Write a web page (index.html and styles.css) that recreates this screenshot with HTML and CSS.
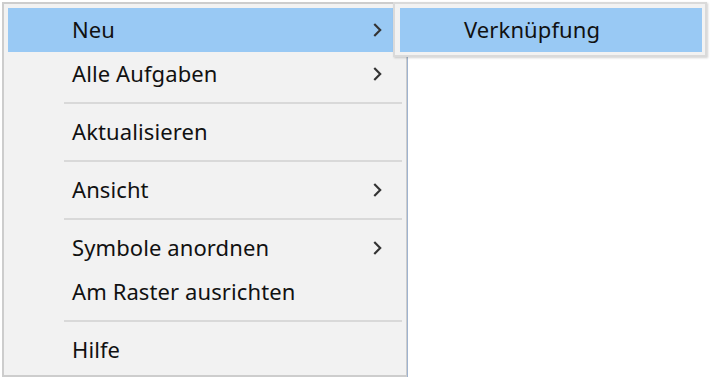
FILE: index.html
```html
<!DOCTYPE html>
<html lang="de">
<head>
<meta charset="utf-8">
<title>Kontextmenü</title>
<link rel="stylesheet" href="styles.css">
</head>
<body>
<div class="desk">
  <ul class="menu">
    <li class="item active"><span class="label">Neu</span><svg class="chev" viewBox="0 0 8 13"><path d="M1 1 L6.5 6.5 L1 12"/></svg></li>
    <li class="item"><span class="label">Alle Aufgaben</span><svg class="chev" viewBox="0 0 8 13"><path d="M1 1 L6.5 6.5 L1 12"/></svg></li>
    <li class="sep"></li>
    <li class="item"><span class="label">Aktualisieren</span></li>
    <li class="sep"></li>
    <li class="item"><span class="label">Ansicht</span><svg class="chev" viewBox="0 0 8 13"><path d="M1 1 L6.5 6.5 L1 12"/></svg></li>
    <li class="sep"></li>
    <li class="item"><span class="label">Symbole anordnen</span><svg class="chev" viewBox="0 0 8 13"><path d="M1 1 L6.5 6.5 L1 12"/></svg></li>
    <li class="item"><span class="label">Am Raster ausrichten</span></li>
    <li class="sep"></li>
    <li class="item"><span class="label">Hilfe</span></li>
  </ul>
  <ul class="menu submenu">
    <li class="item active"><span class="label">Verknüpfung</span></li>
  </ul>
</div>
</body>
</html>
```

FILE: styles.css
```css
html, body {
  margin: 0;
  padding: 0;
  background: #ffffff;
}
body {
  font-family: "Noto Sans", "Open Sans", "DejaVu Sans", sans-serif;
  color: #111;
}
.desk {
  position: relative;
  width: 710px;
  height: 380px;
  padding: 2px 0 0 2px;
  box-sizing: border-box;
}
.menu {
  list-style: none;
  margin: 0;
  width: 405px;
  box-sizing: border-box;
  padding: 4px 4px 3px 4px;
  background: #f2f2f2;
  border: 2px solid #cdcdcd;
  border-right-width: 1px;
  box-shadow: 1px 0 0 #9fb3cf;
  display: flex;
  flex-direction: column;
}
.item {
  height: 44px;
  display: flex;
  align-items: center;
  padding: 0 20px 0 64px;
  font-size: 22px;
  letter-spacing: 0.1px;
}
.item .label {
  flex: 1;
  position: relative;
  top: -1px;
}
.item.active {
  background: #99c9f4;
}
.chev {
  width: 9px;
  height: 14px;
  fill: none;
  stroke: #333;
  stroke-width: 2;
}
.sep {
  height: 14px;
  display: flex;
  align-items: center;
  padding-left: 56px;
}
.sep::before {
  content: "";
  display: block;
  width: 100%;
  height: 2px;
  background: #d9d9d9;
}
.submenu {
  position: absolute;
  left: 393px;
  top: 2px;
  width: 314px;
  padding: 4px 3px 3px 5px;
  border: 2px solid #dadada;
  box-shadow: 1px 1px 2px rgba(0, 0, 0, 0.18);
}
```
